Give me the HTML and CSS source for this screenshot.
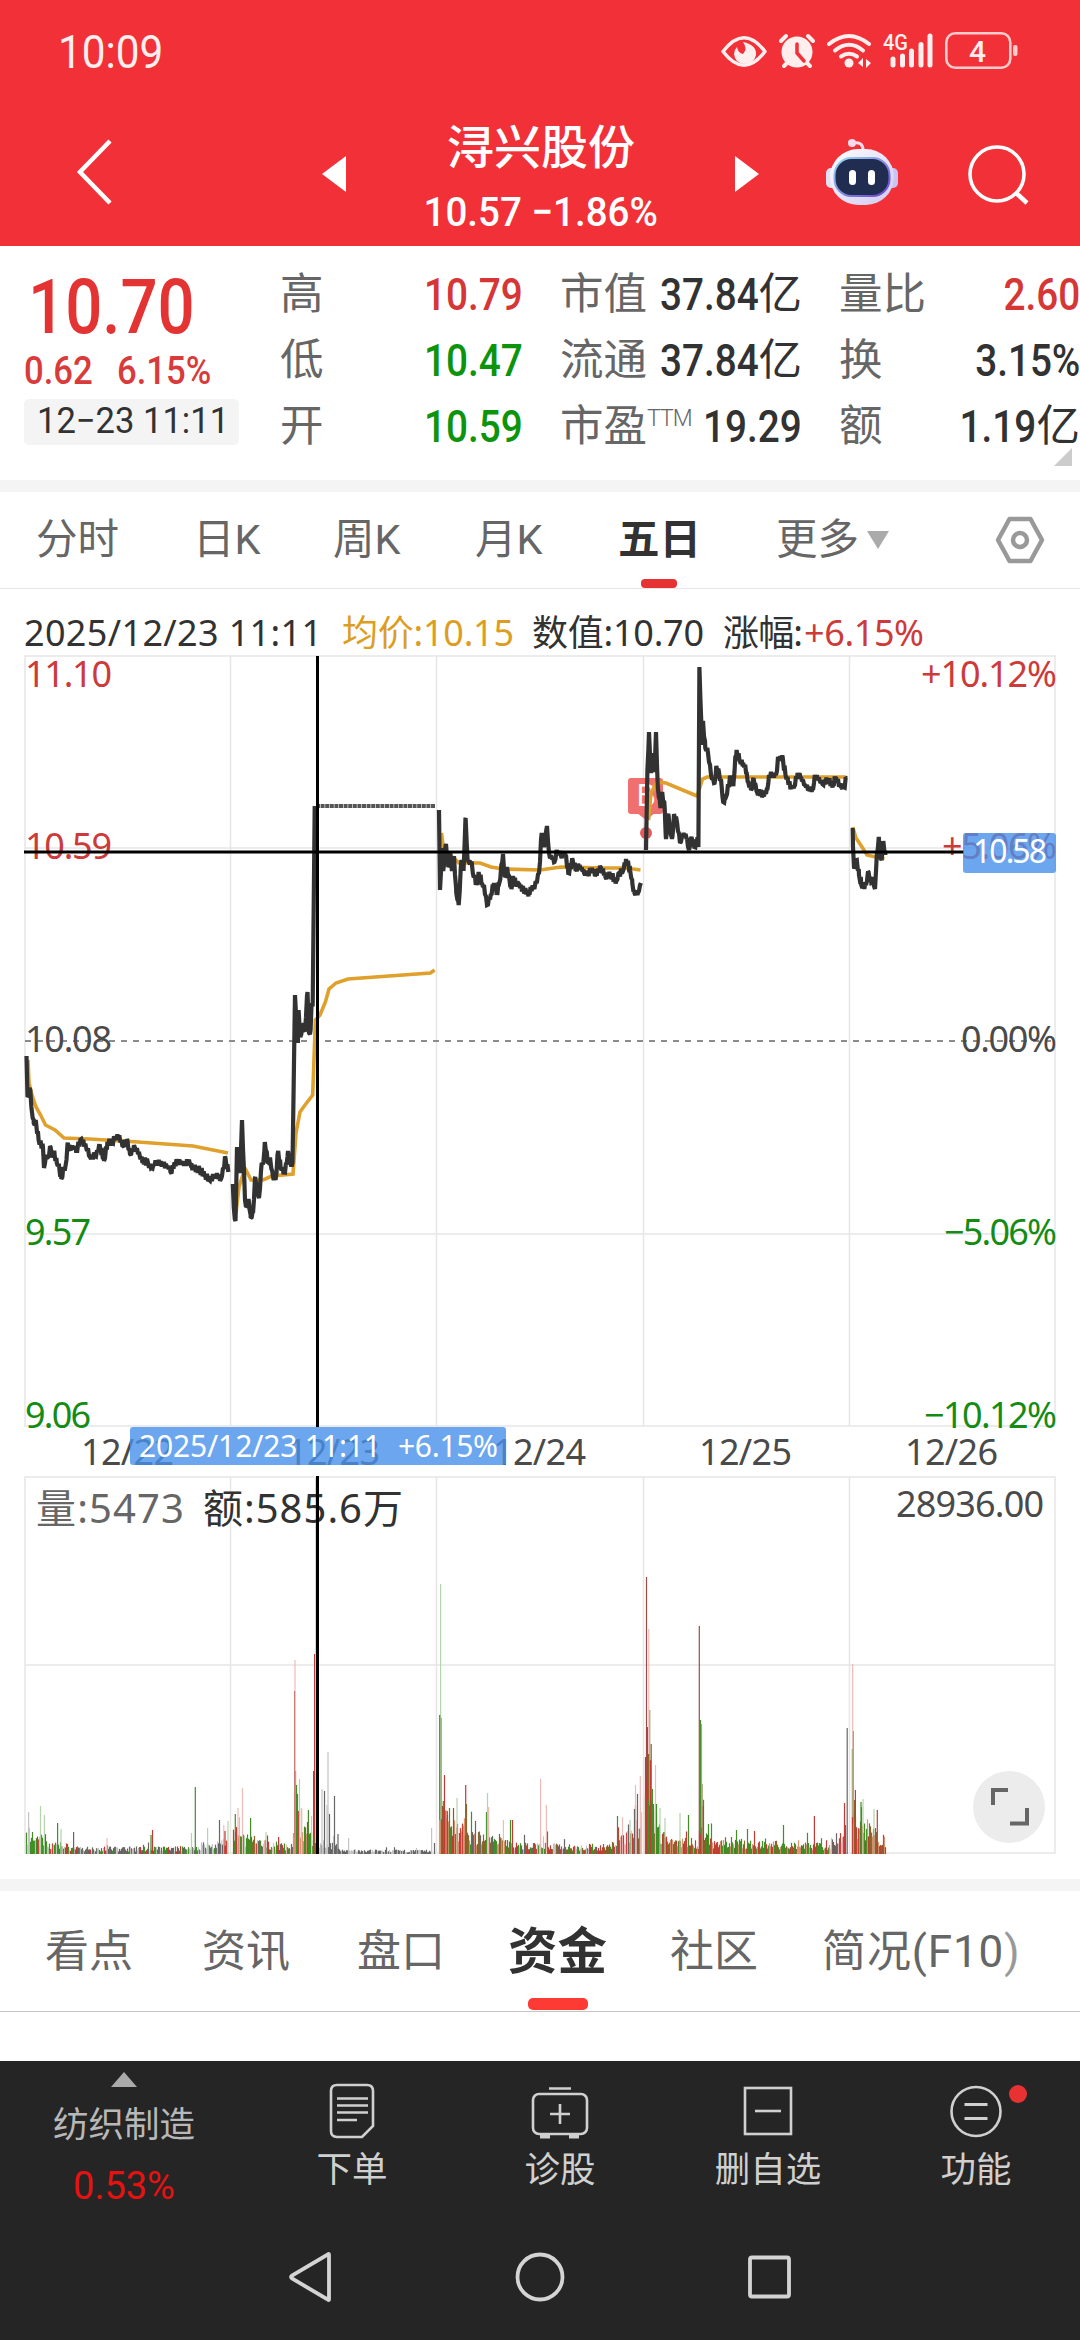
FILE: index.html
```html
<!DOCTYPE html>
<html lang="zh-CN">
<head>
    <meta charset="UTF-8">
    <meta name="viewport" content="width=device-width, initial-scale=1.0">
    <title>浔兴股份</title>
    <link rel="stylesheet" href="styles.css">
</head>
<body>
    <header class="header">
        <div class="status">
            <span class="time num">10:09</span>
            <svg class="status-icons" width="310" height="44" viewBox="715 29 310 44">
                <!-- eye -->
                <path d="M723 51.500Q744 24 765 51.500Q744 79 723 51.500Z" fill="none" stroke="#fee" stroke-width="3.500" stroke-linejoin="round"/>
                <path d="M743 42Q757 45 756 55Q754 64 744 64Q735 63 734 54Q734 50 737 47Q738 53 743 54Q748 49 743 42Z" fill="#fee"/>
                <!-- alarm -->
                <circle cx="797" cy="52" r="15.500" fill="#fee"/>
                <path d="M781 41L786 36M813 41L808 36M784 66L788 62M810 66L806 62" stroke="#fee" stroke-width="4" stroke-linecap="round"/>
                <path d="M797 44V53L804 61" fill="none" stroke="#f23037" stroke-width="3.500" stroke-linecap="round"/>
                <!-- wifi -->
                <g fill="none" stroke="#fee" stroke-width="4" stroke-linecap="round">
                    <path d="M829 44Q849 28 869 44"/>
                    <path d="M835 50.500Q849 39 863 50.500"/>
                    <path d="M841 56.500Q849 51 857 56.500"/>
                </g>
                <circle cx="849" cy="63" r="4.500" fill="#fee"/>
                <path d="M858 63L863 58V67ZM866 59L871 63L866 68Z" fill="#fee"/>
                <!-- signal -->
                <text x="883" y="50" class="net" textLength="25" lengthAdjust="spacingAndGlyphs">4G</text>
                <path d="M893 59V65M902.500 56V65M911.500 51V65M921 44.500V65M930 36V65" stroke="#fee" stroke-width="5" stroke-linecap="round"/>
                <!-- battery -->
                <rect x="946.300" y="33.300" width="64" height="34.500" rx="9" fill="none" stroke="#fcc" stroke-width="2.600"/>
                <rect x="1013" y="45" width="4.500" height="11" rx="2" fill="#fcc"/>
                <text x="977.500" y="62" class="bat" text-anchor="middle">4</text>
            </svg>
        </div>
        <div class="titlebar">
            <svg class="back" width="40" height="70" viewBox="0 0 40 70"><path d="M36 4L6 35L36 66" fill="none" stroke="#fff" stroke-width="4.500"/></svg>
            <svg class="prev" width="24" height="36" viewBox="0 0 24 36"><path d="M24 0V36L0 18Z" fill="#fff"/></svg>
            <div class="stock">
                <div class="stock-name">浔兴股份</div>
                <div class="stock-price"><span class="num mid">10.57 −1.86%</span></div>
            </div>
            <svg class="next" width="24" height="36" viewBox="0 0 24 36"><path d="M0 0V36L24 18Z" fill="#fff"/></svg>
            <svg class="robot" width="74" height="68" viewBox="0 0 74 68">
                <defs>
                    <linearGradient id="shell" x1="0" y1="0" x2="1" y2="1">
                        <stop offset="0" stop-color="#fff"/><stop offset="1" stop-color="#cfc8f0"/>
                    </linearGradient>
                    <linearGradient id="rim" x1="0" y1="0" x2="1" y2="1">
                        <stop offset="0" stop-color="#9adcf2"/><stop offset="1" stop-color="#6a3fd0"/>
                    </linearGradient>
                </defs>
                <path d="M27 5Q38 3 38 12" fill="none" stroke="#f3dcec" stroke-width="3"/>
                <circle cx="27" cy="5" r="4" fill="#f3dcec"/>
                <rect x="1" y="30" width="12" height="20" rx="5" fill="#e4e0f5"/>
                <rect x="61" y="30" width="12" height="20" rx="5" fill="#c9c4f0"/>
                <rect x="5" y="11" width="64" height="56" rx="28" fill="url(#shell)"/>
                <rect x="9.500" y="20" width="55" height="38" rx="17" fill="#202c50" stroke="url(#rim)" stroke-width="2"/>
                <rect x="24" y="32" width="7" height="15" rx="3.500" fill="#fff"/>
                <rect x="43" y="32" width="7" height="15" rx="3.500" fill="#fff"/>
            </svg>
            <svg class="search" width="62" height="62" viewBox="0 0 62 62"><circle cx="30" cy="30" r="27" fill="none" stroke="#fff" stroke-width="3.600"/><path d="M48 48L60 59" stroke="#fff" stroke-width="4.500"/></svg>
        </div>
    </header>

    <section class="quote">
        <div class="last">
            <div class="last-price"><span class="num">10.70</span></div>
            <div class="last-change"><span class="num">0.62</span><span class="num">6.15%</span></div>
            <div class="last-date"><span class="num">12−23 11:11</span></div>
        </div>
        <div class="cells">
            <span class="k">高</span><span class="v up"><b class="num">10.79</b></span>
            <span class="k">市值</span><span class="v"><b class="num">37.84</b>亿</span>
            <span class="k">量比</span><span class="v up"><b class="num">2.60</b></span>

            <span class="k">低</span><span class="v down"><b class="num">10.47</b></span>
            <span class="k">流通</span><span class="v"><b class="num">37.84</b>亿</span>
            <span class="k">换</span><span class="v"><b class="num">3.15%</b></span>

            <span class="k">开</span><span class="v down"><b class="num">10.59</b></span>
            <span class="k">市盈<sup>TTM</sup></span><span class="v"><b class="num">19.29</b></span>
            <span class="k">额</span><span class="v"><b class="num">1.19</b>亿</span>
        </div>
        <i class="corner"></i>
    </section>

    <nav class="periods">
        <span>分时</span>
        <span>日K</span>
        <span>周K</span>
        <span>月K</span>
        <span class="on">五日</span>
        <span>更多<i class="caret"></i></span>
        <svg width="50" height="50" viewBox="0 0 50 50" fill="none" stroke="#999" stroke-width="4.500" stroke-linejoin="round"><path d="M14.500 4H35.500L47 25L35.500 46H14.500L3 25Z"/><circle cx="25" cy="25" r="7"/></svg>
    </nav>

    <svg class="chart" width="1080" height="1290" viewBox="0 589 1080 1290">
        <g class="info">
            <text x="24" y="646" textLength="298">2025/12/23 11:11</text>
            <text x="342" y="646" textLength="172" class="avg">均价:10.15</text>
            <text x="532" y="646" textLength="172">数值:10.70</text>
            <text x="723" y="646" textLength="80">涨幅:</text>
            <text x="804" y="646" textLength="120" class="up">+6.15%</text>
        </g>

        <g class="grid">
            <rect x="25" y="656" width="1030" height="770"/>
            <rect x="25" y="1477" width="1030" height="376"/>
            <path d="M25 848H1055M25 1234H1055M25 1665H1055"/>
            <path d="M230.500 656V1426M436.500 656V1426M643.500 656V1426M849.500 656V1426"/>
            <path d="M230.500 1477V1853M436.500 1477V1853M643.500 1477V1853M849.500 1477V1853"/>
        </g>
        <path class="zero" d="M25 1041H1055"/>

        <g class="axis">
            <text x="25" y="687" textLength="87" class="up">11.10</text>
            <text x="25" y="859" textLength="87" class="up">10.59</text>
            <text x="25" y="1052" textLength="87">10.08</text>
            <text x="25" y="1245" textLength="66" class="down">9.57</text>
            <text x="25" y="1428" textLength="66" class="down">9.06</text>
            <text x="921" y="687" textLength="136" class="up">+10.12%</text>
            <text x="942" y="859" textLength="115" class="up">+5.06%</text>
            <text x="961" y="1052" textLength="96">0.00%</text>
            <text x="944" y="1245" textLength="113" class="down">−5.06%</text>
            <text x="924" y="1428" textLength="133" class="down">−10.12%</text>
            <text x="81" y="1465" textLength="93">12/22</text>
            <text x="287" y="1465" textLength="93">12/23</text>
            <text x="493" y="1465" textLength="93">12/24</text>
            <text x="699" y="1465" textLength="93">12/25</text>
            <text x="905" y="1465" textLength="93">12/26</text>
            <text x="896" y="1517" textLength="148">28936.00</text>
        </g>

        <g class="buy">
            <rect x="628" y="778" width="35" height="36" rx="3"/>
            <path d="M637 813H655L646 820Z"/>
            <circle cx="646" cy="833" r="6"/>
            <text x="646" y="806" text-anchor="middle">B</text>
        </g>

        <g id="volume"></g>
        <g id="average"></g>
        <g id="price"></g>
        <path class="limit" d="M316 806H435"/>

        <g class="volinfo">
            <text x="36" y="1523" textLength="148" class="dim">量:5473</text>
            <text x="203" y="1523" textLength="200">额:585.6万</text>
        </g>

        <path class="cross" d="M317.500 656V1427M317.500 1476V1854M24 852H964"/>
        <rect class="tag" x="963" y="833" width="93" height="40" rx="3"/>
        <text class="tag-text" x="973" y="863" textLength="74">10.58</text>
        <rect class="tag" x="130" y="1427" width="376" height="38" rx="3"/>
        <text class="tag-text small" x="139" y="1457" textLength="242">2025/12/23 11:11</text>
        <text class="tag-text small" x="398" y="1457" textLength="100">+6.15%</text>

        <circle cx="1009" cy="1807" r="36" fill="#ececec"/>
        <path d="M993 1805V1790H1008M1027 1808V1823.500H1010" fill="none" stroke="#666" stroke-width="4"/>
    </svg>

    <nav class="sections">
        <span>看点</span>
        <span>资讯</span>
        <span>盘口</span>
        <span class="on">资金</span>
        <span>社区</span>
        <span class="last-tab">简况(F10<em>)</em></span>
    </nav>
    <div class="blank"></div>

    <footer class="toolbar">
        <div class="industry">
            <i class="tri-up"></i>
            <span>纺织制造</span>
            <span class="pct">0.53%</span>
        </div>
        <div class="tool">
            <svg width="60" height="60" viewBox="-3 0 60 60"><path d="M12 4H42Q48 4 48 10V45L37 56H12Q6 56 6 50V10Q6 4 12 4Z"/><path d="M12 17.500H43M12 24.500H43M12 31.500H43M12 39H32"/></svg>
            <span>下单</span>
        </div>
        <div class="tool">
            <svg width="60" height="60" viewBox="0 0 60 60"><rect x="3" y="13" width="54" height="40" rx="6"/><path d="M19 7.500H41M30 23V43M20 33H40"/><path d="M10 55.500H20M39 55.500H49" stroke-width="4"/></svg>
            <span>诊股</span>
        </div>
        <div class="tool">
            <svg width="60" height="60" viewBox="0 0 60 60"><rect x="7" y="7" width="46" height="46"/><path d="M17 30H43"/></svg>
            <span>删自选</span>
        </div>
        <div class="tool">
            <svg width="60" height="60" viewBox="0 0 60 60"><circle cx="30" cy="30.500" r="24.500"/><path d="M18.500 23.500H41.500M18.500 37.500H41.500" stroke-width="3"/></svg>
            <span>功能</span>
            <i class="dot"></i>
        </div>
    </footer>
    <div class="sysnav">
        <svg width="50" height="56" viewBox="0 0 50 56"><path d="M43 6V50Q43 52 41 50L6 29.500Q4 28 6 26.500L41 6Q43 4 43 6Z"/></svg>
        <svg width="50" height="56" viewBox="0 0 50 56"><circle cx="25" cy="28" r="22.500"/></svg>
        <svg width="50" height="56" viewBox="0 0 50 56"><rect x="6" y="8.500" width="39" height="39" rx="2"/></svg>
    </div>

    <script src="script.js"></script>
</body>
</html>
```
FILE: styles.css
```css
body {
    margin: 0;
    width: 1080px;
    height: 2340px;
    overflow: hidden;
    background: #fff;
    color: #323232;
    font-family: Roboto, "Noto Sans CJK SC", sans-serif;
}
svg {
    display: block;
    flex: none;
}
i, em, b {
    font-style: normal;
}
/* narrow digits */
.num {
    display: inline-block;
    font-weight: 500;
    transform: scaleX(.86);
    transform-origin: left;
    white-space: nowrap;
}
.num.mid {
    transform: scaleX(.94);
    transform-origin: center;
}

.header {
    height: 246px;
    background: #f23037;
    color: #fff;
}
.status {
    display: flex;
    justify-content: space-between;
    align-items: center;
    height: 102px;
    padding: 0 55px 0 58px;
}
.time {
    margin-top: 2px;
    font-size: 46px;
    font-weight: 400;
    color: #fee;
    transform: scaleX(.92);
}
.net {
    font: 500 22px Roboto, sans-serif;
    fill: #fee;
}
.bat {
    font: 500 30px Roboto, sans-serif;
    fill: #fee;
}
.titlebar {
    display: flex;
    height: 144px;
}
.back { margin: 35px 0 0 74px; }
.prev { margin: 54px 0 0 208px; }
.stock {
    width: 390px;
    text-align: center;
}
.stock-name {
    height: 80px;
    line-height: 91px;
    font-size: 47px;
    font-weight: 500;
}
.stock-price {
    height: 60px;
    line-height: 60px;
    font-size: 41px;
}
.next { margin: 54px 0 0 -1px; }
.robot { margin: 36px 0 0 66px; }
.search { margin: 42px 0 0 68px; }

.quote {
    position: relative;
    display: flex;
    height: 246px;
    border-bottom: 12px solid #f4f4f4;
    box-sizing: border-box;
}
.last {
    width: 280px;
    color: #e43333;
}
.last-price {
    margin: 17px 0 0 28px;
    height: 86px;
    line-height: 88px;
    font-size: 76px;
}
.last-change {
    display: flex;
    gap: 16px;
    margin-left: 24px;
    height: 48px;
    line-height: 45px;
    font-size: 39px;
    color: #d93a3a;
}
.last-change .num { transform: scaleX(.89); }
.last-date {
    margin: 2px 0 0 24px;
    width: 215px;
    height: 46px;
    box-sizing: border-box;
    padding-left: 13px;
    border-radius: 5px;
    background: #f4f4f4;
    color: #323232;
    line-height: 45px;
    font-size: 36px;
}
.last-date .num {
    font-weight: 400;
    transform: scaleX(.96);
}
.cells {
    display: grid;
    grid-template-columns: 100px 143px 143px 136px 145px 133px;
    grid-template-rows: repeat(3, 66px);
    margin-top: 16px;
    line-height: 66px;
    font-size: 43.5px;
}
.k {
    color: #666;
    white-space: nowrap;
    font-size: 43.5px;
}
.k:nth-child(6n+3), .k:nth-child(6n+5) { padding-left: 37px; }
.k sup {
    display: inline-block;
    font-size: 23px;
    line-height: 20px;
    vertical-align: 15px;
    font-weight: 300;
    letter-spacing: -1px;
}
.v {
    display: flex;
    justify-content: flex-end;
    white-space: nowrap;
}
.v .num {
    font-size: 45px;
    transform-origin: right;
}
.up { color: #d63636; fill: #d63636; }
.down { color: #0c940c; fill: #0c940c; }
.corner {
    position: absolute;
    right: 8px;
    bottom: 14px;
    border-left: 18px solid transparent;
    border-bottom: 18px solid #ccc;
}

.periods {
    display: grid;
    grid-template-columns: 157px 140px 142px 143px 158px 219px 50px;
    align-items: center;
    height: 97px;
    box-sizing: border-box;
    padding-left: 36px;
    border-bottom: 1px solid #e5e5e5;
    font-size: 41.5px;
    color: #666;
    line-height: 96px;
}
.periods .on, .sections .on {
    position: relative;
    color: #323232;
    font-weight: 700;
}
.periods .on::after {
    content: "";
    position: absolute;
    left: 23px;
    bottom: 0;
    width: 36px;
    height: 9px;
    border-radius: 4px;
    background: #e63232;
}
.caret {
    display: inline-block;
    margin-left: 8px;
    border: 11px solid transparent;
    border-top: 18px solid #aaa;
    border-bottom: 0;
    vertical-align: 5px;
}

.chart text {
    font-family: "Noto Sans", "Noto Sans CJK SC", sans-serif;
    font-size: 36px;
}
.info text { fill: #323232; }
.info .avg { fill: #dc9e22; }
.info .up, .axis .up { fill: #cd3a3a; }
.axis text { fill: #4a4a4a; }
.axis .down { fill: #148c14; }
.grid {
    fill: none;
    stroke: #e6e6e6;
    stroke-width: 1.5;
}
.zero {
    stroke: #8c8c8c;
    stroke-width: 2;
    stroke-dasharray: 6 6;
}
#price, #average {
    fill: none;
    stroke: #323232;
    stroke-width: 4.2;
    stroke-linejoin: miter;
    stroke-miterlimit: 2;
}
#average {
    stroke: #e0a02c;
    stroke-width: 3.6;
}
.limit {
    stroke: #555;
    stroke-width: 4;
    stroke-dasharray: 4 .6;
}
.buy { fill: #f07070; }
.buy circle { fill: #e45a5a; }
.chart .buy text {
    font-size: 30px;
    fill: #fff;
}
.chart .volinfo text {
    font-size: 40px;
    fill: #323232;
}
.chart .volinfo .dim { fill: #666; }
.cross {
    stroke: #000;
    stroke-width: 3;
}
.tag {
    fill: #4790ea;
    fill-opacity: .8;
}
.chart .tag-text {
    font-size: 32px;
    fill: #fff;
}
.chart .tag-text.small { font-size: 30px; }

.sections {
    display: grid;
    grid-template-columns: 157px 155px 151px 162px 152px 257px;
    height: 133px;
    box-sizing: border-box;
    padding-left: 45px;
    border-top: 12px solid #f4f4f4;
    border-bottom: 1.5px solid #c4c4c4;
    line-height: 123px;
    font-size: 44px;
    color: #666;
    white-space: nowrap;
}
.sections span { height: 119px; }
.sections em { color: #999; }
.last-tab { letter-spacing: .9px; }
.sections .on { font-size: 49.5px; }
.sections .on::after {
    content: "";
    position: absolute;
    left: 20px;
    bottom: 0;
    width: 60px;
    height: 12px;
    border-radius: 5px;
    background: #fd3a34;
}
.blank { height: 49px; }

.toolbar {
    display: grid;
    grid-template-columns: 248px 208px 208px 208px 208px;
    height: 149px;
    background: #252525;
    color: #d0d0d0;
    font-size: 35.5px;
}
.industry, .tool {
    position: relative;
    display: flex;
    flex-direction: column;
    align-items: center;
}
.tool svg {
    margin-top: 20px;
    fill: none;
    stroke: #d0d0d0;
    stroke-width: 2.6;
}
.tool span {
    margin-top: 3px;
    line-height: 52px;
}
.tri-up {
    margin-top: 11px;
    border: 13px solid transparent;
    border-bottom: 15px solid #aaa;
    border-top: 0;
}
.industry span {
    margin-top: 12px;
    line-height: 52px;
    color: #b8b8b8;
}
.industry .pct {
    margin-top: 9px;
    color: #e61212;
    font-size: 38px;
}
.dot {
    position: absolute;
    left: 137px;
    top: 24px;
    width: 18px;
    height: 18px;
    border-radius: 50%;
    background: #e83232;
}
.sysnav {
    display: flex;
    justify-content: center;
    gap: 179px;
    height: 130px;
    padding-top: 39px;
    box-sizing: border-box;
    background: #252525;
}
.sysnav svg {
    fill: none;
    stroke: #d4d4d4;
    stroke-width: 3.8;
}
```
FILE: script.js
```js
const NS = 'http://www.w3.org/2000/svg';

// one polyline per trading day, x y pairs
const price = [
    [26.5,1056, 27.5,1097, 30.3,1090, 31.7,1110, 33.7,1123, 36,1122, 38.6,1140, 43,1148, 44,1168, 46,1155, 48,1157, 50.6,1147, 52.3,1155, 54.4,1153, 56.8,1163, 59.2,1167, 61.3,1179, 63.7,1168, 65.5,1166, 67.8,1143, 70,1149, 73.3,1146, 76.4,1149, 81.3,1139, 86,1147, 90,1157, 95,1156, 99.9,1146, 104,1161, 107.4,1142, 112,1143, 115.4,1136, 119.5,1137, 123,1146, 127.4,1140, 130,1154, 135,1148, 139.5,1155, 143,1160, 148,1163, 151.5,1168, 156.7,1162, 162,1163, 167.7,1166, 170.5,1172, 177.3,1162, 183,1163, 189.4,1162, 192.8,1167, 199.7,1170, 205,1175, 209,1180, 215,1175, 221,1179, 225.5,1158, 228.3,1172],
    [232.8,1184, 233.8,1207, 235.5,1221, 237,1147, 240,1173, 242,1120, 245,1200, 247,1206, 248.6,1199, 250.7,1218, 253,1213, 255.2,1177, 259,1198, 261.7,1163, 263.4,1162, 264.8,1142, 268,1163, 270.3,1160, 272.7,1175, 275.5,1180, 278.2,1151, 280.6,1168, 284,1172, 286.5,1165, 288,1151, 291,1165, 292.5,1163, 295,995, 297.9,1043, 298.6,1010, 300.3,1037, 303.7,1023, 305,1030, 307.5,992, 309,1033, 310.6,1030, 311.6,1003, 312.7,1003, 314.7,806],
    [439,810, 440,890, 442,848, 443.2,871, 446,844, 448.3,867, 450.4,855, 452,871, 454,856, 456.3,893, 458.7,905, 461.4,860, 463.5,871, 465.6,818, 467.6,860, 471.8,863, 472.8,873, 477,885, 478.6,872, 482,883, 484,885, 487,905, 490.7,895, 494,883, 496.5,893, 499.3,883, 503,854, 505,877, 507,867, 511.4,889, 513,876, 515.5,883, 519,883, 523.4,890, 528.6,893, 533.7,887, 536,882, 539,873, 541.7,833, 544,847, 547,826, 549,853, 554.5,862, 556.5,850, 560.7,855, 566,855, 568.2,873, 572.7,860, 576,869, 579.6,865, 584,873, 588,874, 592,868, 596,874, 601,868, 605.4,877, 610.6,875, 616.4,881, 619,873, 622.6,872, 626,859, 630.2,871, 632.3,883, 634.4,893, 638,893, 641,883],
    [646,850, 647.4,770, 649,732, 651,773, 653,753, 654.3,772, 656,732, 657.8,787, 660.5,808, 662.2,792, 664.7,808, 666,839, 668.4,814, 671,835, 672.5,836, 674,814, 677,822, 680,843, 683.6,833, 687,838, 689,850, 691.5,837, 694.3,847, 697.4,837, 698.4,847, 699.4,667, 702,745, 703,721, 705.3,748, 708,753, 711,775, 714.6,783, 716.3,766, 719,772, 721.5,785, 723.2,802, 726,797, 730.4,777, 733.5,783, 735.3,757, 736.6,750, 739.7,760, 743.2,763, 746.6,772, 748.3,782, 751,790, 753.5,778, 757,792, 763,794, 767.3,790, 769,775, 776,775, 778.3,758, 782.8,758, 785.5,775, 790.7,787, 794,787, 797.6,773, 801,777, 805,785, 808.6,789, 813,790, 814.8,775, 819.6,780, 822.4,784, 827.5,780, 832.7,785, 836,777, 841.3,787, 843.7,787, 846.5,778],
    [852.7,828, 853,847, 854,867, 856.8,860, 859,875, 861.3,885, 866,885, 868.5,872, 871.3,883, 873,877, 875,889, 876.8,855, 878.8,837, 880.6,858, 882,856, 883.3,841, 885.4,855]
];

const average = [
    [28,1060, 29,1083, 32,1095, 36,1107, 40.6,1115, 45.5,1125, 55,1130, 64,1138, 89.5,1139, 138,1142, 193,1146, 228,1153],
    [236,1213, 239,1187, 245,1168, 251,1180, 263,1180, 272,1176, 293,1174, 296,1133, 300,1112, 305,1105, 312.7,1095, 315.4,1020, 320,1015, 325.4,1002, 329,989, 336,983, 348,979, 430.4,973, 434.6,970],
    [441.5,833, 444,854, 451,856, 456,860, 458.7,863, 480,863, 491,867, 503,869, 540,870, 561,867, 605,868, 626,868, 640.5,870],
    [648.5,820, 651,793, 657,782, 666,783, 697,796, 700,787, 702.5,779, 707,777, 846,777],
    [852.7,827, 856,838, 862,847, 867,855, 884.5,859]
];

const RED = '#c23a33', GREEN = '#3f8f26', GREY = '#666', BROWN = '#8a6428';
const PINK = '#eebcb8', LIME = '#b3d4ac', SILVER = '#c4c4c4', OLIVE = '#aaa878', SALMON = '#dd9272';

// x, height, colour
const spikes = [
    [28.6,42,SILVER], [40.5,48,LIME], [44.4,39,LIME], [57.6,31,GREEN], [61,25,LIME], [73.6,22,GREY], [107,16,PINK], [151,19,GREEN], [152.5,24,RED],
    [191.5,21,LIME], [195.3,67,GREEN], [207.6,26,LIME], [219.5,34,GREY], [223.8,29,PINK], [225,23,RED], [228,33,LIME],
    [235.3,40,GREEN], [236.6,27,RED], [238,46,PINK], [242.5,66,PINK], [250.6,36,GREEN], [266,22,LIME], [278.6,17,RED],
    [295,194,PINK], [294.6,163,'#cf7a76'], [295.6,83,SALMON], [296.5,69,GREEN], [297.5,60,GREEN], [298.5,43,RED], [299.5,75,LIME], [301.5,46,PINK], [307.5,32,RED], [308.4,44,GREEN], [311.6,38,PINK],
    [313.6,83,RED], [314.6,200,RED], [315.8,376,PINK],
    [322,65,SILVER], [324.5,63,GREY], [327,49,SILVER], [328,102,SILVER], [329.5,40,GREY], [334.5,58,GREY], [338,20,GREY], [348.6,16,SILVER], [431.6,26,SILVER], [434.5,11,GREY],
    [440.6,270,LIME], [439.7,139,GREEN], [441.3,136,OLIVE], [442.5,48,RED], [443.3,53,GREEN], [444.5,79,RED], [446,44,SALMON], [447.3,43,RED], [449.5,46,GREEN], [453.5,46,RED], [457,56,LIME], [465.7,69,RED], [466.5,50,BROWN],
    [486.5,42,GREEN], [487.5,61,LIME], [488.6,47,PINK], [503.4,34,PINK], [510.5,34,GREEN], [512.5,34,RED],
    [540.6,75,PINK], [546.4,49,PINK], [617.5,38,GREEN], [630,34,LIME], [635.5,69,PINK], [634.5,45,GREY], [637.5,60,GREY], [640.3,78,PINK],
    [645.5,97,RED], [646.5,277,'#a04a48'], [647.5,127,RED], [648.8,225,PINK], [649.8,144,OLIVE], [648.6,100,BROWN], [651.2,110,BROWN], [652.4,65,GREEN], [653.5,50,GREEN], [655.5,89,PINK], [656.5,50,GREEN], [660,46,LIME], [665,36,LIME],
    [680,41,LIME], [688.5,39,GREEN], [699.3,228,'#a04a48'], [700.4,134,GREEN], [701.5,130,OLIVE], [702.3,70,OLIVE], [703.3,48,RED], [708.5,30,GREEN], [747.5,25,GREEN], [783.5,29,GREEN], [814.4,38,RED],
    [844.5,51,RED], [847.2,126,GREY],
    [852.7,190,PINK], [852.3,105,OLIVE], [853.4,123,OLIVE], [854.6,54,BROWN], [855.4,64,RED], [861,52,GREEN], [863,55,LIME], [874,45,LIME], [877.3,44,RED]
];

// x from, x to, height from, height to, colours
const base = [
    [26, 45, 26, 18, [GREEN, GREEN, GREEN, LIME, RED]],
    [45, 70, 12, 10, [GREEN, BROWN, SILVER, RED, LIME]],
    [70, 185, 7, 7, [GREY, RED, SILVER, GREEN, GREY]],
    [185, 216, 7, 11, [GREY, GREEN, SILVER]],
    [216, 228, 14, 12, [RED, GREY, PINK]],
    [233, 256, 25, 16, [GREEN, RED, LIME, BROWN]],
    [256, 293, 14, 9, [RED, GREEN, GREY, PINK]],
    [293, 316, 30, 20, [GREEN, BROWN, RED, SALMON]],
    [319, 340, 14, 9, [GREY, SILVER]],
    [340, 432, 4, 4, [GREY, GREY, SILVER]],
    [439, 466, 50, 26, [BROWN, RED, GREEN, SALMON]],
    [466, 512, 24, 13, [BROWN, GREEN, GREY, SALMON]],
    [512, 548, 9, 14, [GREY, RED, SILVER, GREEN]],
    [548, 612, 10, 9, [GREY, RED, GREEN, BROWN, SILVER]],
    [612, 642, 12, 42, [BROWN, GREY, RED, PINK]],
    [645, 660, 66, 30, [RED, BROWN, GREEN]],
    [660, 699, 22, 13, [BROWN, RED, GREEN, SALMON]],
    [699, 712, 36, 18, [GREEN, BROWN, RED]],
    [712, 830, 14, 11, [BROWN, GREEN, RED, SALMON, GREEN]],
    [830, 846, 14, 30, [GREY, RED, PINK]],
    [852, 886, 44, 17, [BROWN, RED, GREEN, SALMON]]
];

let seed = 7;
function rand() {
    seed = (seed * 16807) % 2147483647;
    return seed / 2147483647;
}

function add(parent, tag, attrs) {
    const el = document.createElementNS(NS, tag);
    for (const key in attrs) el.setAttribute(key, attrs[key]);
    document.getElementById(parent).appendChild(el);
}

function bar(x, h, color) {
    add('volume', 'rect', { x: x - 0.6, y: 1854 - h, width: 1.2, height: h, fill: color });
}

average.forEach(day => add('average', 'polyline', { points: day.join(' ') }));

// minute ticks wobble between the turning points
price.forEach(day => {
    const pts = [];
    for (let i = 0; i < day.length; i += 2) {
        pts.push(day[i], day[i + 1]);
        const dx = day[i + 2] - day[i];
        const dy = day[i + 3] - day[i + 1];
        for (let s = 1; s < dx; s++) {
            pts.push(day[i] + s, day[i + 1] + dy * s / dx + (s % 2 ? 1 : -1) * (1 + rand() * 3));
        }
    }
    add('price', 'polyline', { points: pts.join(' ') });
});

spikes.filter(s => s[1] > 90).forEach(s => bar(...s));
base.forEach(([x0, x1, h0, h1, colors]) => {
    for (let x = x0; x < x1; x += 1) {
        let h = (h0 + (h1 - h0) * (x - x0) / (x1 - x0)) * (0.35 + rand() * 0.75);
        if (rand() > 0.9) h *= 1.7;
        bar(x + 0.5, Math.max(h, 1.5), colors[Math.floor(rand() * colors.length)]);
    }
});
spikes.filter(s => s[1] <= 90).forEach(s => bar(...s));
```
